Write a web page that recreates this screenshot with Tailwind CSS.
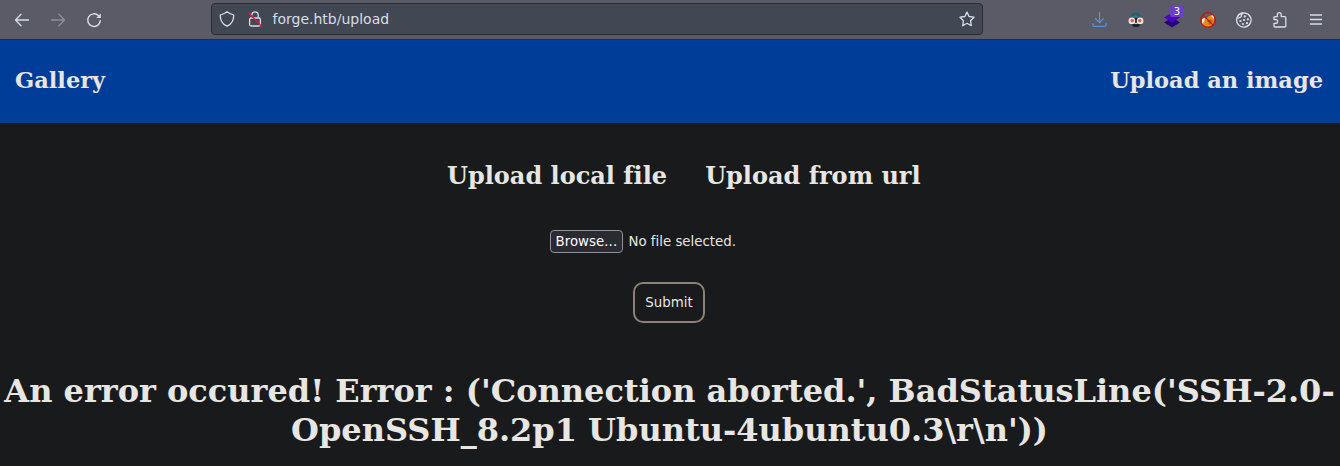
<!DOCTYPE html>
<html lang="en">
<head>
<meta charset="utf-8">
<title>Upload an image</title>
<script src="https://cdn.jsdelivr.net/npm/@tailwindcss/browser@4"></script>
</head>
<body class="w-[1340px] h-[466px] overflow-hidden flex flex-col bg-[#181a1b] text-[#e8e6e3] font-['DejaVu_Serif',serif] [font-variant-ligatures:none]">
<div class="h-10 shrink-0 flex items-start bg-[#5a5b67] border-b border-[#2b2b33] font-['DejaVu_Sans',sans-serif] text-[#d8dee9]">
  <div class="flex h-[39px] items-center pl-1 w-[211px]">
    <span class="w-9 flex justify-center"><svg class="size-4" viewBox="0 0 16 16" fill="none" stroke="currentColor" stroke-width="1.3" stroke-linecap="round" stroke-linejoin="round"><path d="M14.5 8H1.5M7 2.3L1.5 8L7 13.7"/></svg></span>
    <span class="w-9 flex justify-center opacity-40"><svg class="size-4" viewBox="0 0 16 16" fill="none" stroke="currentColor" stroke-width="1.3" stroke-linecap="round" stroke-linejoin="round"><path d="M1.5 8H14.5M9 2.3L14.5 8L9 13.7"/></svg></span>
    <span class="w-9 flex justify-center"><svg class="size-4" viewBox="0 0 16 16" fill="none" stroke="currentColor" stroke-width="1.4" stroke-linecap="round"><path d="M12.6 3.8A6.3 6.3 0 1 0 14.3 8.6"/><path d="M14.8 1.4V5.9H10.2Z" fill="currentColor" stroke="none"/></svg></span>
  </div>
  <div class="mt-[3px] w-[772px] h-8 rounded-[4px] border border-[#2b2d36] bg-[#414753] flex items-center">
    <svg class="size-4 ml-[7px]" viewBox="0 0 16 16" fill="none" stroke="currentColor" stroke-width="1.3" stroke-linejoin="round"><path d="M8 .8C6.2 2.3 3.9 3.2 1.3 4C1.1 9 3.2 12.9 8 15.2C12.8 12.9 14.9 9 14.7 4C12.1 3.2 9.8 2.3 8 .8Z"/></svg>
    <svg class="size-4 ml-3" viewBox="0 0 16 16" fill="none" stroke="currentColor" stroke-width="1.3"><rect x="2.6" y="7" width="10.8" height="8" rx="1.5"/><path d="M4.8 4.6V4A3.2 3.2 0 0 1 11.2 4V7"/><path d="M1.3 1.8L14.7 15.2" stroke="#e8124a" stroke-width="1.4"/></svg>
    <span class="ml-[9.5px] text-[14px] leading-5 text-[#d8dee9]">forge.htb/upload</span>
    <svg class="size-4 ml-auto mr-[7px]" viewBox="0 0 16 16" fill="none" stroke="currentColor" stroke-width="1.3" stroke-linejoin="round"><path d="M8 1.1L10.1 5.5L15 6.2L11.5 9.7L12.3 14.7L8 12.3L3.7 14.7L4.5 9.7L1 6.2L5.9 5.5Z"/></svg>
  </div>
  <div class="flex h-[39px] items-center ml-[99px]">
    <span class="w-9 flex justify-center text-[#5294e2]"><svg class="size-4" viewBox="0 0 16 16" fill="none" stroke="currentColor" stroke-width="1.2" stroke-linecap="round" stroke-linejoin="round"><path d="M7.5 .5V10.5M3.5 6.7L7.5 10.7L11.5 6.7M1 11.5V13Q1 14.3 2.5 14.3H12.5Q14 14.3 14 13V11.5"/></svg></span>
    <span class="w-9 flex justify-center"><svg class="size-4" viewBox="0 0 16 16"><path d="M2 7.5C2 3 5 .6 9.5 .6L11.2 1L10.5 1.8C13 3 14 5 14 7.5Z" fill="#24616d"/><path d="M2 6.8L6 5.8H10L14 6.8L13 12.5L10 15H6L3 12.5Z" fill="#17262f"/><path d="M3.5 5.5L7 3.3L12 4.8L9 5.8Z" fill="#347681"/><circle cx="3.9" cy="8.9" r="3.3" fill="#f3ece5"/><circle cx="12.1" cy="8.9" r="3.3" fill="#f3ece5"/><circle cx="4.2" cy="8.6" r="1.9" fill="#df6556"/><circle cx="11.8" cy="8.6" r="1.9" fill="#df6556"/><path d="M6.8 11Q8 10 9.2 11L10 12H6Z" fill="#d9cec5"/></svg></span>
    <span class="w-9 flex justify-center relative"><svg class="size-4" viewBox="0 0 16 16"><path d="M0 10.5L8 5.5L16 10.5L8 15.5Z" fill="#26057b"/><path d="M0 5.5L8 .8L16 5.5L8 10.5Z" fill="#4c09b9"/></svg><span class="absolute left-[16px] -top-[5.5px] w-[14px] h-[11px] rounded-[2px] bg-[#6c3fc5] text-white text-[10px] leading-[11px] text-center">3</span></span>
    <span class="w-9 flex justify-center"><svg class="size-4" viewBox="0 0 16 16"><path d="M1.5 12Q2 7 5 5L7 6L9 4L13 2.5L14.5 7L13 13L8 15L3 14Z" fill="#e68a19"/><path d="M2 7L5 6L4 10L2 12ZM11 4L14 3L14 7Z" fill="#f0e3d2"/><path d="M7 9L10 7L13 9L10 13Z" fill="#bd6412"/><path d="M2.5 4L6 2L9 3L5 5Z" fill="#6a625f"/><circle cx="8" cy="8" r="7.3" fill="none" stroke="#c4110f" stroke-width="1.2"/><path d="M2.9 2.9L13.1 13.1" stroke="#c4110f" stroke-width="1.2"/></svg></span>
    <span class="w-9 flex justify-center"><svg class="size-4" viewBox="0 0 16 16" fill="none" stroke="currentColor" stroke-width="1.3" stroke-linejoin="round"><path d="M6 1A7.2 7.2 0 1 0 8.5 .8L6 1Q6.5 2.5 5.3 3.3Q5.5 5.500 3.500 5.300Q2.500 6.500 1.200 5.800"/><g fill="currentColor" stroke="none"><circle cx="8.800" cy="4.400" r="1.100"/><circle cx="11.900" cy="7.300" r="1.100"/><circle cx="8" cy="8" r="1.100"/><circle cx="4.400" cy="9" r="1.100"/><circle cx="7" cy="12" r="1.100"/><circle cx="11" cy="11.200" r="1.100"/></g></svg></span>
    <span class="w-9 flex justify-center"><svg class="size-4" viewBox="0 0 16 16" fill="none" stroke="currentColor" stroke-width="1.3" stroke-linejoin="round"><path d="M2 7.500V5.500Q2 4.600 2.900 4.600H5.400V2.600A1.900 1.900 0 0 1 9.200 2.600V4.600H12.700Q13.800 4.600 13.800 5.700V14Q13.800 15 12.800 15H3Q2 15 2 14V11.300H3.700A1.900 1.900 0 0 0 3.700 7.500Z"/></svg></span>
    <span class="w-9 flex justify-center"><svg class="size-4" viewBox="0 0 16 16" fill="none" stroke="currentColor" stroke-width="1.3" stroke-linecap="round"><path d="M2.500 3H13.500M2.500 7.500H13.500M2.500 12H13.500"/></svg></span>
  </div>
</div>
<header class="h-[83px] shrink-0 bg-[#003d99] flex items-center justify-between pb-1 pl-[15px] pr-[17px] text-[22.5px] leading-7 font-bold">
  <a>Gallery</a><a>Upload an image</a>
</header>
<main class="flex flex-col">
  <div class="mt-[39px] h-7 ml-[447px] flex gap-[38px] text-[24px] leading-7 font-bold whitespace-nowrap"><a>Upload local file</a><a>Upload from url</a></div>
  <div class="mt-[40px] ml-[550px] h-[23px] flex items-center font-['DejaVu_Sans',sans-serif] text-[13.333px]">
    <button class="w-[73px] h-[23px] rounded-[4px] border border-[#8f8f9d] bg-[#2b2a33] text-[#fbfbfe] leading-[20px]">Browse…</button><span class="ml-[5.5px] leading-[20px]">No file selected.</span>
  </div>
  <button class="mt-[29px] ml-[633px] w-[72px] h-[41px] rounded-[10px] border-2 border-[#8c8273] font-['DejaVu_Sans',sans-serif] text-[13.333px]">Submit</button>
  <h1 class="mt-[49px] pr-px text-center text-[32px] leading-[39px] font-bold">An error occured! Error : ('Connection aborted.', BadStatusLine('SSH-2.0-<br>OpenSSH_8.2p1 Ubuntu-4ubuntu0.3\r\n'))</h1>
</main>
</body>
</html>
